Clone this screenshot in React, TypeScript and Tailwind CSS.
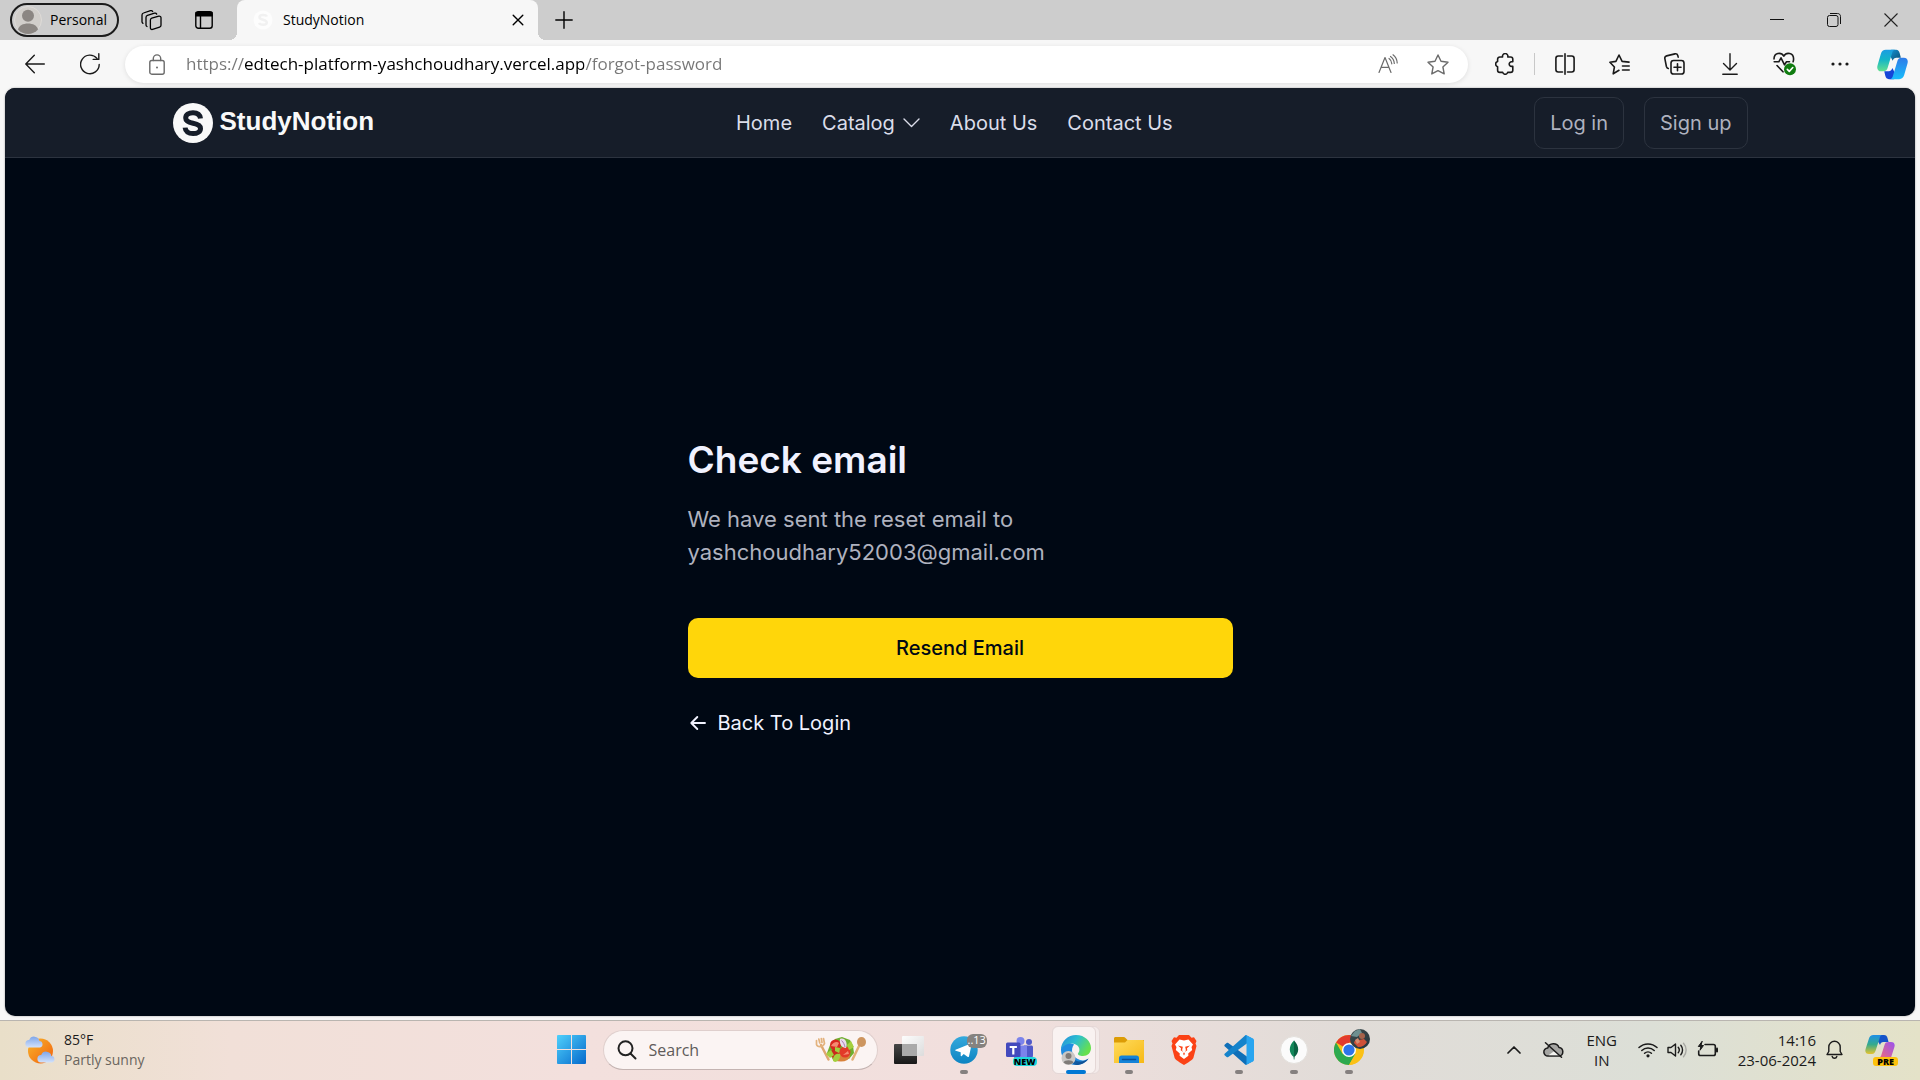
import type { ReactNode } from 'react';

const line = {
  fill: 'none',
  stroke: 'currentColor',
  strokeWidth: 1.4,
  strokeLinecap: 'round' as const,
  strokeLinejoin: 'round' as const,
};

function ToolButton({ label, children, className = '' }: { label: string; children: ReactNode; className?: string }) {
  return (
    <button type="button" aria-label={label} className={`flex h-10 w-[55px] shrink-0 items-center justify-center ${className}`}>
      {children}
    </button>
  );
}

function CopilotIcon() {
  return (
    <svg viewBox="0 0 30 30" className="size-[31px]" aria-hidden="true">
      <defs>
        <linearGradient id="cpA" x1="0" y1="0" x2="0" y2="1">
          <stop offset="0" stopColor="#1b9de2" />
          <stop offset="0.45" stopColor="#14b5c8" />
          <stop offset="1" stopColor="#63e08f" />
        </linearGradient>
        <linearGradient id="cpB" x1="0" y1="0" x2="0" y2="1">
          <stop offset="0" stopColor="#2f7be8" />
          <stop offset="1" stopColor="#19bdfb" />
        </linearGradient>
        <linearGradient id="cpC" x1="0" y1="0" x2="1" y2="1">
          <stop offset="0" stopColor="#1595d8" />
          <stop offset="1" stopColor="#0a4f74" />
        </linearGradient>
      </defs>
      <path d="M14 .8h4.500c2 0 2.900 1.300 3.400 3l1.200 4.600h-4.300c-2 0-3 1-3.600 3L11 3.500C11.700 1.800 12.500.8 14 .8z" fill="url(#cpC)" />
      <path d="M16 29.200h-4.500c-2 0-2.900-1.300-3.400-3L7 21.500h4.300c2 0 3-1 3.600-3L19 26.500c-.7 1.700-1.500 2.700-3 2.700z" fill="#1546d8" />
      <path d="M8.500.8h9C15.500 1 15 2.500 14.400 4.500l-4 13.500c-.7 2.400-1.800 3.600-4 3.600H4c-3 0-4.400-2.500-3.500-5.600L3.700 4.800C4.500 2.200 6 .8 8.500.8z" fill="url(#cpA)" />
      <path d="M21.500 29.200h-9c2-.2 2.500-1.700 3.100-3.700l4-13.500c.7-2.400 1.800-3.600 4-3.600H26c3 0 4.400 2.500 3.500 5.600l-3.200 11.200c-.8 2.600-2.300 4-4.800 4z" fill="url(#cpB)" />
    </svg>
  );
}

function TitleBar() {
  return (
    <header className="flex h-10 items-stretch bg-[#cdcdcd] text-black">
      <button type="button" className="ml-2.5 mt-[3px] flex h-[34px] w-[109px] items-center gap-2 rounded-full border-2 border-[#1b1b1b] pl-0.5 text-sm">
        <svg viewBox="0 0 28 28" className="size-7 shrink-0" aria-hidden="true">
          <circle cx="14" cy="14" r="13.500" fill="#d1ceca" stroke="#dedbd8" />
          <circle cx="14" cy="9.800" r="6" fill="#8b8682" />
          <path d="M4 23.500c1-4 5-6 10-6s9 2 10 6a13.400 13.400 0 0 1-20 0z" fill="#8b8682" />
        </svg>
        Personal
      </button>
      <button type="button" aria-label="Workspaces" className="ml-[5px] flex w-[53px] items-center justify-center">
        <svg viewBox="0 0 22 22" className="size-[22px]" {...line} strokeWidth={1.300} aria-hidden="true">
          <path d="M11.800 9.200l7-2c1.200-.3 2.200.4 2.200 1.600v7.400c0 .9-.5 1.600-1.400 1.900l-7 2.300c-1.200.4-2.200-.3-2.200-1.500v-7.800c0-.9.500-1.600 1.400-1.900z" />
          <path d="M7 17.500c-.7-.3-1-.8-1-1.600V8.400c0-1 .5-1.700 1.500-2l7-2.200c1-.3 1.800.1 2.200.9M3 14.300c-.7-.3-1-.8-1-1.600V6c0-1 .5-1.700 1.500-2l7-2.300c1-.3 1.800.1 2.200.8" />
        </svg>
      </button>
      <button type="button" aria-label="Tab actions menu" className="flex w-[53px] items-center justify-center">
        <svg viewBox="0 0 18 18" className="size-[18px]" {...line} aria-hidden="true">
          <rect x=".8" y=".8" width="16.400" height="16.400" rx="2.500" />
          <path d="M5.500 5v12" />
          <path d="M1 1.500h16v3.200H1z" fill="currentColor" />
        </svg>
      </button>
      <div className="relative ml-[7px] flex w-[301px] items-center rounded-t-lg bg-[#f7f7f7] pl-4 before:absolute before:-left-2 before:bottom-0 before:size-2 before:bg-[radial-gradient(circle_at_0_0,transparent_8px,#f7f7f7_8px)] after:absolute after:-right-2 after:bottom-0 after:size-2 after:bg-[radial-gradient(circle_at_100%_0,transparent_8px,#f7f7f7_8px)]">
        <svg viewBox="0 0 20 20" className="size-5" aria-hidden="true">
          <circle cx="10" cy="10" r="9.500" fill="#fdfdfd" />
          <path d="M14 6.500C13 4.700 6.500 4.300 6.500 7.300c0 3 7.300 2 7.300 5.200 0 3-6.800 2.700-7.800.5" fill="none" stroke="#f1f1f1" strokeWidth="2.500" />
        </svg>
        <span className="ml-2.5 flex-1 text-sm">StudyNotion</span>
        <button type="button" aria-label="Close tab" className="flex h-full w-10 items-center justify-center">
          <svg viewBox="0 0 12 12" className="size-3" {...line} aria-hidden="true"><path d="M1.200 1.200l9.600 9.600M10.800 1.200l-9.600 9.600" /></svg>
        </button>
      </div>
      <button type="button" aria-label="New tab" className="flex w-[52px] items-center justify-center">
        <svg viewBox="0 0 18 18" className="size-[18px]" {...line} aria-hidden="true"><path d="M9 .8v16.400M.8 9h16.400" /></svg>
      </button>
      <div className="ml-auto mr-px flex">
        <button type="button" aria-label="Minimize" className="flex w-[57px] items-center justify-center">
          <svg viewBox="0 0 14 14" className="size-3.5" aria-hidden="true"><path d="M0 6.500h14" stroke="#111" /></svg>
        </button>
        <button type="button" aria-label="Restore" className="flex w-[57px] items-center justify-center">
          <svg viewBox="0 0 14 14" className="size-3.5" fill="none" stroke="#111" aria-hidden="true">
            <rect x=".5" y="2.500" width="10.500" height="11" rx="2" />
            <path d="M3 .5h7.500c1.800 0 3 1.200 3 3V11" />
          </svg>
        </button>
        <button type="button" aria-label="Close window" className="flex w-[57px] items-center justify-center">
          <svg viewBox="0 0 14 14" className="size-3.5" stroke="#222" strokeWidth="1.100" aria-hidden="true"><path d="M.5.5l13 13M13.500.5l-13 13" /></svg>
        </button>
      </div>
    </header>
  );
}

function AddressBar() {
  return (
    <div className="flex h-12 items-center bg-[#f7f7f7] pl-[7px] text-[#1a1a1a]">
      <ToolButton label="Back">
        <svg viewBox="0 0 20 20" className="size-5" {...line} aria-hidden="true"><path d="M19.300 10H1M9.300 1.300L.8 10l8.500 8.700" /></svg>
      </ToolButton>
      <ToolButton label="Refresh">
        <svg viewBox="0 0 20 22" className="h-[22px] w-5" {...line} aria-hidden="true"><path d="M19.200 11.500A9.300 9.300 0 1 1 17 5.400M18.800.8v5.600h-5.600" /></svg>
      </ToolButton>
      <div className="ml-2 mr-[9px] flex h-[37px] flex-1 items-center rounded-full bg-white pl-[24px] pr-[5px] text-[#6b6b6b] shadow-[0_1px_5px_rgba(0,0,0,0.10)]">
        <svg viewBox="0 0 16 21" className="h-[21px] w-4" {...line} aria-hidden="true">
          <rect x=".8" y="6.500" width="14.400" height="13.700" rx="2" />
          <path d="M4.300 6.500V4.600a3.700 3.700 0 0 1 7.400 0v1.900" />
          <circle cx="8" cy="13.400" r="1" fill="currentColor" stroke="none" />
        </svg>
        <input
          aria-label="Address"
          defaultValue="https://edtech-platform-yashchoudhary.vercel.app/forgot-password"
          className="ml-[21px] flex-1 bg-[linear-gradient(90deg,#767676_58px,#000_58px,#000_398px,#767676_398px)] bg-clip-text text-[17px] text-transparent caret-black outline-none"
        />
        <button type="button" aria-label="Read aloud" className="flex w-[50px] items-center justify-center">
          <svg viewBox="0 0 20 20" className="size-5" {...line} strokeWidth={1.200} aria-hidden="true">
            <path d="M1 18.500L7 3.500l6 15M3.200 13.300h7.600M11 4.500c1.800 1.200 2.700 3 2.800 5.300M12.500 2.500c2.300 1.700 3.600 4 3.800 7M15 .8c2.700 2 4 4.800 4.200 8.200" />
          </svg>
        </button>
        <button type="button" aria-label="Add to favorites" className="flex w-[50px] items-center justify-center">
          <svg viewBox="0 0 22 21" className="h-[21px] w-[22px]" {...line} aria-hidden="true">
            <path d="M11 1l3 6.300 7 .9-5.100 4.800 1.300 6.900L11 16.600 4.800 19.900 6.100 13 1 8.200l7-.9z" />
          </svg>
        </button>
      </div>
      <ToolButton label="Extensions">
        <svg viewBox="0 0 20 22" className="h-[22px] w-5" {...line} strokeWidth={1.600} aria-hidden="true">
          <path d="M4.800 4h2.800a2.700 2.700 0 1 1 5.200 0h2.800c1.200 0 2.200 1 2.200 2.200v2.600h-1.300a2.300 2.300 0 1 0 0 4.600h1.300v3.800c0 1.200-1 2.200-2.200 2.200h-2.900a2.600 2.600 0 0 1-5 0H4.800c-1.200 0-2.200-1-2.200-2.200v-3.500a2.700 2.700 0 0 1 0-5.200V6.200C2.600 5 3.600 4 4.800 4z" />
        </svg>
      </ToolButton>
      <span className="mx-0.5 h-[22px] w-px bg-[#c8c8c8]" />
      <ToolButton label="Split screen">
        <svg viewBox="0 0 20 22" className="h-[22px] w-5" {...line} strokeWidth={1.600} aria-hidden="true">
          <path d="M7.500 3H3.300C2 3 .9 4.100.9 5.400v11.200C.9 17.900 2 19 3.300 19h4.200M10 .8v20.400M12.500 3h4.200c1.300 0 2.400 1.100 2.400 2.400v11.200c0 1.300-1.100 2.400-2.400 2.400h-4.200" />
        </svg>
      </ToolButton>
      <ToolButton label="Favorites">
        <svg viewBox="0 0 21 21" className="size-[21px]" {...line} strokeWidth={1.600} aria-hidden="true">
          <path d="M10 16.300l-5.800 3.500 1.200-6.800L.9 8.300l6-.9L10 1l3.100 6.400 6.900.7M13.500 12h6.700M13.500 16h6.700" />
        </svg>
      </ToolButton>
      <ToolButton label="Collections">
        <svg viewBox="0 0 21 22" className="h-[22px] w-[21px]" {...line} strokeWidth={1.600} aria-hidden="true">
          <rect x="7" y="7.500" width="13" height="13.500" rx="2.600" />
          <path d="M13.500 10.800v7M10 14.300h7M4.300 15.500c-1.200-.3-1.600-1-1.900-2L.9 5.800c-.3-1.400.4-2.600 1.700-2.900l8.300-2c1.400-.3 2.500.4 2.900 1.700l.4 1.500" />
        </svg>
      </ToolButton>
      <ToolButton label="Downloads">
        <svg viewBox="0 0 16 22" className="h-[22px] w-4" {...line} aria-hidden="true"><path d="M8 .8v16M1.500 10.500L8 17l6.500-6.500M.8 21.200h14.400" /></svg>
      </ToolButton>
      <ToolButton label="Browser essentials">
        <svg viewBox="0 0 23 24" className="h-6 w-[23px]" {...line} strokeWidth={1.600} aria-hidden="true">
          <path d="M1 7c0-6 7-7.500 9.800-2.800C13.600-.5 20.600 1 20.600 7c0 1-.2 1.800-.5 2.700M1.200 9.800h4.600l2.200-4 3.500 7 2-3h3M4 13.500l6 6.300" />
          <circle cx="17" cy="17.300" r="6" fill="#107c10" stroke="none" />
          <path d="M14.300 17.400l2 2 3.500-3.900" stroke="#fff" />
        </svg>
      </ToolButton>
      <ToolButton label="Settings and more">
        <svg viewBox="0 0 18 4" className="h-1 w-[18px]" fill="currentColor" aria-hidden="true"><circle cx="2" cy="2" r="1.600" /><circle cx="9" cy="2" r="1.600" /><circle cx="16" cy="2" r="1.600" /></svg>
      </ToolButton>
      <ToolButton label="Copilot" className="-ml-0.5"><CopilotIcon /></ToolButton>
    </div>
  );
}

function SiteNav() {
  return (
    <nav className="border-b border-[#2c333f] bg-[#161d29] font-[Inter,sans-serif] text-xl leading-[30px]">
      <div className="mx-auto flex h-[69px] w-11/12 max-w-[1575px] items-center justify-between">
        <a href="#home" className="flex w-[202px] items-center gap-[7px] text-[#f9f9f9]">
          <svg viewBox="0 0 40 40" className="size-10 shrink-0" aria-hidden="true">
            <circle cx="20" cy="20" r="20" fill="#f9f9f9" />
            <path d="M27.500 15.500C27 11.500 24 9.700 20 9.700c-4.300 0-7.300 2-7.300 5.300 0 3 2.200 4.200 7.300 5.200 5.200 1 7.500 2.200 7.500 5.200 0 3.200-3 5.200-7.500 5.200-4.700 0-7.600-2.300-7.900-6" fill="none" stroke="#161d29" strokeWidth="5" />
          </svg>
          <span className="pb-1 font-['Liberation_Sans',sans-serif] text-[26px] font-bold">StudyNotion</span>
        </a>
        <ul className="flex gap-[30px] text-[#dbddea]">
          <li><a href="#home">Home</a></li>
          <li>
            <button type="button" className="flex items-center gap-2">
              Catalog
              <svg viewBox="0 0 17 10" className="h-2.5 w-[17px]" {...line} aria-hidden="true"><path d="M1 1l7.500 7.500L16 1" /></svg>
            </button>
          </li>
          <li><a href="#about">About Us</a></li>
          <li><a href="#contact">Contact Us</a></li>
        </ul>
        <div className="flex gap-5 text-[#afb2bf]">
          <a href="#login" className="rounded-[10px] border border-[#2c333f] px-[15px] py-2.5">Log in</a>
          <a href="#signup" className="rounded-[10px] border border-[#2c333f] px-[15px] py-2.5">Sign up</a>
        </div>
      </div>
    </nav>
  );
}

function CheckEmail() {
  return (
    <main className="flex flex-1 items-center justify-center font-[Inter,sans-serif]">
      <section className="w-[545px]">
        <h1 className="text-[37px] font-semibold leading-[48px] text-[#f1f2ff]">Check email</h1>
        <p className="mb-[49px] mt-[19px] text-[22px] leading-[33px] text-[#afb2bf]">
          We have sent the reset email to<br />yashchoudhary52003@gmail.com
        </p>
        <button type="button" className="w-full rounded-[10px] bg-[#ffd60a] py-[15px] text-xl font-medium leading-[30px] text-[#000814]">
          Resend Email
        </button>
        <a href="#login" className="mt-[30px] flex items-center gap-2.5 text-xl leading-[30px] text-[#f1f2ff]">
          <svg viewBox="0 0 20 20" className="size-5" {...line} strokeWidth={1.900} aria-hidden="true"><path d="M17 10H3.500M9.300 4L3.300 10l6 6" /></svg>
          Back To Login
        </a>
      </section>
    </main>
  );
}

function TaskbarApp({ label, running = false, children }: { label: string; running?: boolean; children: ReactNode }) {
  return (
    <button type="button" aria-label={label} className="relative flex h-12 w-[55px] items-center justify-center">
      {children}
      {running && <span className="absolute bottom-0 h-1 w-2 rounded-full bg-[#85807f]" />}
    </button>
  );
}

function Taskbar() {
  return (
    <footer className="grid h-[60px] grid-cols-[1fr_auto_1fr] items-center border-t border-[#b9b5b0] bg-[linear-gradient(90deg,#e9dfc9_0%,#f1e0d8_12%,#f3e0dd_30%,#f1dfdd_52%,#e1dcd8_70%,#dcdfd7_86%,#e4e2c8_100%)] pb-0.5 text-[#1b1b1b]">
      <button type="button" className="flex w-fit items-center gap-2 pl-6 text-left text-sm leading-5">
        <svg viewBox="0 0 32 30" className="h-[30px] w-8" aria-hidden="true">
          <defs>
            <linearGradient id="sun" x1="0" y1="0" x2="1" y2="1"><stop offset="0" stopColor="#f8b62d" /><stop offset="1" stopColor="#f2600c" /></linearGradient>
            <linearGradient id="cloud" x1="0" y1="0" x2="0" y2="1"><stop offset="0" stopColor="#7fa6ea" /><stop offset="1" stopColor="#d3e2fb" /></linearGradient>
          </defs>
          <circle cx="16.500" cy="16" r="12.500" fill="url(#sun)" />
          <path d="M5 12.500a3.700 3.700 0 0 1 .2-7.400A5.300 5.300 0 0 1 15.400 6a3.300 3.300 0 0 1 .6 6.500z" fill="url(#cloud)" />
          <path d="M17 27.500a3.700 3.700 0 0 1 .2-7.400 5.300 5.300 0 0 1 10.200.9 3.300 3.300 0 0 1 .6 6.500z" fill="url(#cloud)" />
        </svg>
        <span>85°F<br /><span className="text-[#6a655e]">Partly sunny</span></span>
      </button>

      <div className="flex items-center">
        <TaskbarApp label="Start">
          <svg viewBox="0 0 29 29" className="size-[29px]" aria-hidden="true">
            <defs><linearGradient id="win" gradientUnits="userSpaceOnUse" x1="0" y1="0" x2="29" y2="29"><stop offset="0" stopColor="#4fd0fb" /><stop offset="1" stopColor="#0569cc" /></linearGradient></defs>
            <path d="M1 0h13v14H0V1a1 1 0 0 1 1-1zM15 0h13a1 1 0 0 1 1 1v13H15zM0 15h14v14H1a1 1 0 0 1-1-1zM15 15h14v13a1 1 0 0 1-1 1H15z" fill="url(#win)" />
          </svg>
        </TaskbarApp>
        <label className="mx-1 flex h-10 w-[275px] items-center rounded-full border border-[#dfcfcd] border-b-[#c4b4b2] bg-[#fbf4f3] pl-[13px] pr-2.5">
          <svg viewBox="0 0 20 20" className="size-5 shrink-0" fill="none" stroke="#222" strokeWidth="2" strokeLinecap="round" aria-hidden="true"><circle cx="8.500" cy="8.300" r="7" /><path d="M13.500 13.500l5 5" /></svg>
          <input placeholder="Search" aria-label="Search" className="ml-3 w-full min-w-0 flex-1 bg-transparent text-base outline-none placeholder:text-[#5f5b5a]" />
          <svg viewBox="0 0 52 28" className="h-7 w-[52px] shrink-0" aria-hidden="true">
            <path d="M6 9l7.500 14.500" stroke="#dfa770" strokeWidth="2.500" strokeLinecap="round" />
            <path d="M1.500 4.500v4c1 3 6.500 3 8-1L8.500 2.500M3.800 3l1 4M6.300 2.500l.7 4" stroke="#e3b27d" strokeWidth="1.700" fill="none" strokeLinecap="round" />
            <path d="M45 8l-7.500 15.500" stroke="#e3b078" strokeWidth="2.500" strokeLinecap="round" />
            <ellipse cx="46.500" cy="6" rx="4.500" ry="5" fill="#cd955f" />
            <path d="M12 17l3-8 5-6 7-2 8 3 3 6 1 7-5 6-5-2-5 4-6-1-2-4z" fill="#6fae2e" />
            <ellipse cx="26" cy="20" rx="9" ry="5.500" fill="#d9823a" />
            <circle cx="20.500" cy="9" r="5.500" fill="#d8281f" />
            <circle cx="30" cy="16" r="5.500" fill="#e23a28" />
            <circle cx="20" cy="17.500" r="4.500" fill="#c92a1c" />
            <path d="M16 10c2-4 6-5 8-3l-2 4zM28 19l5-4 1 3z" fill="#f58b72" />
            <path d="M25 3c5-2 8 4 6 9-4 0-7-4-6-9z" fill="#e9dcec" />
            <path d="M26.500 4.500c2 2 3 4 3.500 6.500" stroke="#a979b5" fill="none" />
            <path d="M18 25c0-6 3-8 7-7 1 4-2 8-5 8zM32 9l4-4 3 6-5 3zM11 18l5-4 3 5-4 3zM20 11l5 1-1 5-4-2z" fill="#a4cf3e" />
          </svg>
        </label>
        <TaskbarApp label="Task view">
          <svg viewBox="0 0 30 30" className="size-[30px]" aria-hidden="true">
            <defs>
              <linearGradient id="tvA" x1="0" y1="0" x2="0" y2="1"><stop offset="0" stopColor="#464646" /><stop offset="1" stopColor="#181818" /></linearGradient>
              <linearGradient id="tvB" x1="0" y1="0" x2="1" y2="1"><stop offset="0" stopColor="#fdfdfd" /><stop offset="1" stopColor="#dcdcdc" /></linearGradient>
            </defs>
            <rect x="0" y="9" width="23" height="20" rx="1" fill="url(#tvA)" />
            <rect x="8" y="1" width="22" height="20" rx="1" fill="url(#tvB)" />
            <path d="M8 9h15v12H8z" fill="#a9a9a9" />
          </svg>
        </TaskbarApp>
        <TaskbarApp label="Telegram" running>
          <svg viewBox="0 0 28 28" className="size-7" aria-hidden="true">
            <defs><linearGradient id="tg" x1="0" y1="0" x2="0" y2="1"><stop offset="0" stopColor="#35a9dc" /><stop offset="1" stopColor="#0d84c2" /></linearGradient></defs>
            <circle cx="14" cy="14" r="13.700" fill="url(#tg)" />
            <path d="M5.500 13.800l14.800-6c.8-.3 1.400.2 1.200 1.200L19 20.200c-.2.900-.8 1-1.500.6l-3.800-2.800-2 1.900c-.5.500-1 .3-1-.4v-3.300l-5-1.500c-.6-.2-.6-.7-.2-.9z" fill="#fff" />
          </svg>
          <span className="absolute left-[30px] top-2 flex h-3.5 items-center rounded-md bg-[#85827f] px-px text-[11px] text-white">..13</span>
        </TaskbarApp>
        <TaskbarApp label="Microsoft Teams">
          <svg viewBox="0 0 28 28" className="ml-0.5 size-7" aria-hidden="true">
            <circle cx="14.500" cy="5" r="4" fill="#7b83eb" /><circle cx="23" cy="6" r="3" fill="#5059c9" />
            <path d="M18 9.500h7.500c.8 0 1.500.7 1.500 1.500v8a5 5 0 0 1-9 3z" fill="#5059c9" />
            <path d="M8 9.500h13V20a7 7 0 0 1-13 3z" fill="#7b83eb" />
            <rect x="0" y="6.500" width="14.500" height="14.500" rx="1.500" fill="#4349bd" />
            <path d="M3.700 10h7.200v2H8.400v6.500H6.200V12H3.700z" fill="#fff" />
          </svg>
          <span className="absolute bottom-2 right-2.5 flex h-[9px] items-center rounded-sm bg-[#1fd8dc] px-px text-[9px] font-extrabold leading-none text-black">NEW</span>
        </TaskbarApp>
        <button type="button" aria-label="Microsoft Edge" className="relative flex h-12 w-[55px] items-center pl-[5px]">
          <span className="absolute left-[5px] h-12 w-12 rounded-md border border-[#e6d9d8] bg-[#f4ebea]" />
          <span className="relative flex h-12 w-11 items-center justify-center rounded-md border border-[#e4d7d6] bg-[#f9f2f1]">
            <svg viewBox="0 0 30 30" className="ml-1 size-[30px]" aria-hidden="true">
              <defs>
                <linearGradient id="edA" x1="0" y1="0" x2="1" y2=".5"><stop offset="0" stopColor="#2488dc" /><stop offset=".5" stopColor="#2cbfcf" /><stop offset="1" stopColor="#66e04e" /></linearGradient>
                <linearGradient id="edB" x1="0" y1="0" x2="1" y2="1"><stop offset="0" stopColor="#1a7fd0" /><stop offset="1" stopColor="#0c4384" /></linearGradient>
              </defs>
              <path d="M0 14C1 8 8 6.500 13 9.500c-4 5-2 13 6 15.500 3.500 1 6.500 0 8.500-1.500C25 27.500 20.500 30 15 30 6.500 30 0 23 0 15z" fill="#1f8ce0" />
              <path d="M10.500 14c-3 6 1.500 12.300 9 12.500 3 0 5.500-1 8-3C25 27.500 20.500 30 15 30 7 28 5.500 19.500 10.500 14z" fill="url(#edB)" />
              <path d="M0 14C.5 6 7 0 15 0c9 0 15 6.500 15 13 0 5-3.500 8-8 8-3.500 0-5.500-1.300-5-2.500.5-1 1.400-1.700 1.400-3.700C18.400 8 6 5.500 0 14z" fill="url(#edA)" />
              <circle cx="7.500" cy="23" r="7" fill="#c9c7c5" /><circle cx="7.500" cy="21" r="3" fill="#7f7b78" />
              <path d="M2.500 27.500c1-3 9-3 10 0a7 7 0 0 1-10 0z" fill="#7f7b78" />
            </svg>
          </span>
          <span className="absolute bottom-0 left-[19px] h-1 w-5 rounded-full bg-[#0078d4]" />
        </button>
        <TaskbarApp label="File Explorer" running>
          <svg viewBox="0 0 30 28" className="h-7 w-[30px]" aria-hidden="true">
            <defs><linearGradient id="fe" x1="0" y1="0" x2="1" y2="1"><stop offset="0" stopColor="#ffdb5c" /><stop offset="1" stopColor="#f7b916" /></linearGradient></defs>
            <path d="M0 2.500C0 1.600.6 1 1.500 1h8c.8 0 1.500.3 2 1l2 2H30v5H0z" fill="#dc9c06" />
            <path d="M0 6.500h11l2.500-2.500H28.500c.9 0 1.500.6 1.500 1.500V27H0z" fill="url(#fe)" />
            <path d="M5 27v-5c0-1.400.9-2.500 2.500-2.500h15c1.600 0 2.500 1.100 2.500 2.500v5z" fill="#1583d8" />
            <path d="M8.500 23.500h13" stroke="#0b4f97" strokeWidth="1.500" strokeLinecap="round" />
          </svg>
        </TaskbarApp>
        <TaskbarApp label="Brave">
          <svg viewBox="0 0 26 30" className="h-[30px] w-[26px]" aria-hidden="true">
            <path d="M8 0h10l2.500 2.700 2.500-.5L25.500 6l-1 2.500 1 2.500-3 11.500c-.5 1.800-2 3-9.500 7.500-7.500-4.500-9-5.700-9.500-7.500L.5 11l1-2.500L.5 6 3 2.200l2.500.5z" fill="#fb4216" />
            <path d="M13 5.500l4.500-1 4.500 5-1.500 2.500.7 3-4 3.500.2 2.300L13 24l-4.400-3.200.2-2.300-4-3.500.7-3L4 9.500l4.500-5z" fill="#fff" />
            <path d="M7 10.500l4.800 1.200-.7 3.600 1.900 3.200 1.900-3.200-.7-3.600 4.800-1.200-3 2.800.3 2-2.500 1.700v2L13 20.500l-.8-1.500v-2l-2.500-1.700.3-2z" fill="#fb4216" />
          </svg>
        </TaskbarApp>
        <TaskbarApp label="Visual Studio Code" running>
          <svg viewBox="0 0 30 30" className="size-[30px]" aria-hidden="true">
            <path d="M.6 9.800l2-1.800c.5-.4 1.200-.4 1.700 0L29 26l-6.500 3.800c-.6.200-1 .1-1.400-.3L.6 11.200c-.4-.4-.4-1 0-1.400z" fill="#0f6fb8" />
            <path d="M.6 20.200l2 1.800c.5.400 1.200.4 1.700 0L29 4 22.500.2c-.6-.2-1-.1-1.400.3L.6 18.800c-.4.400-.4 1 0 1.400z" fill="#1583cb" />
            <path d="M22 .2L29 3.500c.6.300 1 .9 1 1.500v20c0 .6-.4 1.200-1 1.500l-7 3.300c-.5.200-.9.100-1.200-.3.700.3 1.700 0 1.700-1.300V1.800C22.500.5 21.500.2 20.800.5c.3-.4.7-.5 1.200-.3z" fill="#29a5f0" />
          </svg>
        </TaskbarApp>
        <TaskbarApp label="MongoDB Compass" running>
          <svg viewBox="0 0 28 28" className="size-7" aria-hidden="true">
            <circle cx="14" cy="14" r="13.500" fill="#fbfbfb" stroke="#e3e0dc" />
            <path d="M14 4.500c-3 3-4.200 6-4.200 9 0 3.300 1.700 5.700 3.700 7.200l.3 2.800h.4V4.500z" fill="#12875a" />
            <path d="M14 4.500c3 3 4.200 6 4.200 9 0 3.300-1.700 5.700-3.700 7.200l-.3 2.800H14z" fill="#0a6242" />
          </svg>
        </TaskbarApp>
        <TaskbarApp label="Google Chrome" running>
          <svg viewBox="0 0 38 38" className="-mt-1.5 ml-[7px] size-[38px]" aria-hidden="true">
            <defs><linearGradient id="av" x1="0" y1="0" x2="1" y2="1"><stop offset="0" stopColor="#3d4a4c" /><stop offset="1" stopColor="#26353d" /></linearGradient></defs>
            <circle cx="15" cy="22" r="15" fill="#fbc116" />
            <path d="M15 22L2 14.500a15 15 0 0 1 26 0H15z" fill="#e33b2e" />
            <path d="M2 14.500L8.500 25.800 15 22l6.500 3.800L15 37A15 15 0 0 1 2 14.500z" fill="#2da94f" />
            <path d="M15 15.200h13A15 15 0 0 1 15 37l6.500-11.200z" fill="#fbc116" />
            <circle cx="15" cy="22" r="7" fill="#fff" /><circle cx="15" cy="22" r="5.600" fill="#2e74ea" />
            <circle cx="26" cy="11" r="10" fill="url(#av)" />
            <path d="M17 8l4-5 5-2 2 4-5 4z" fill="#6e8f90" />
            <circle cx="28" cy="8" r="3" fill="#a4624b" />
            <path d="M20 15c0-3 3-4 5-3l5-1 3 3a10 10 0 0 1-9 5z" fill="#cf5138" />
            <path d="M21 12l3-2 2 4-3 2z" fill="#d58d72" />
          </svg>
        </TaskbarApp>
      </div>

      <div className="flex items-center justify-end">
        <button type="button" aria-label="Show hidden icons" className="flex h-10 w-10 items-center justify-center">
          <svg viewBox="0 0 14 8" className="h-2 w-3.5" {...line} strokeWidth={1.700} aria-hidden="true"><path d="M1 7l6-6 6 6" /></svg>
        </button>
        <button type="button" aria-label="OneDrive" className="flex h-10 w-10 items-center justify-center">
          <svg viewBox="0 0 21 16" className="h-4 w-[21px]" {...line} strokeWidth={1.500} aria-hidden="true">
            <path d="M5 14a4 4 0 0 1-.3-8A6 6 0 0 1 16 5.500a4.300 4.300 0 0 1 .3 8.500z" fill="#a5a5a2" />
            <path d="M5.500 13.300l5.500-4 5.500 4z" fill="#f4f4f0" stroke="none" />
            <path d="M2.500.8l16 14.400" />
          </svg>
        </button>
        <button type="button" className="w-14 text-center text-[15px] leading-5">ENG<br />IN</button>
        <button type="button" aria-label="Network, volume and battery" className="flex h-10 items-center gap-[9px] pl-2">
          <svg viewBox="0 0 20 16" className="h-4 w-5" {...line} strokeWidth={1.500} aria-hidden="true">
            <path d="M1 5.500a13 13 0 0 1 18 0M3.800 8.500a9 9 0 0 1 12.400 0M6.600 11.300a5 5 0 0 1 6.800 0" />
            <circle cx="10" cy="13.800" r="1.600" fill="currentColor" stroke="none" />
          </svg>
          <svg viewBox="0 0 21 16" className="h-4 w-[21px]" {...line} aria-hidden="true">
            <path d="M1 5.500v5h3L8.500 14V2L4 5.500zM11.200 5.300c1.200 1.500 1.200 4 0 5.400M13.800 3.200c2.300 2.700 2.300 7 0 9.600" />
            <path d="M16.500 1.200c3.500 3.800 3.500 9.800 0 13.600" stroke="#a9a9a4" />
          </svg>
          <svg viewBox="0 0 21 17" className="h-[17px] w-[21px]" {...line} strokeWidth={1.600} aria-hidden="true">
            <path d="M8 3.500h8.500c1 0 1.800.8 1.800 1.800v7.400c0 1-.8 1.800-1.800 1.800H3.500c-1 0-1.800-.8-1.800-1.800V10" />
            <path d="M20 7.500v3" strokeWidth="2" /><path d="M5 .5L1.300 5.500h2.500L3 9.300 6.500 4.500H4.300z" fill="currentColor" strokeWidth="1" />
          </svg>
        </button>
        <button type="button" className="ml-5 text-right text-[15px] leading-5">14:16<br />23-06-2024</button>
        <button type="button" aria-label="Notifications" className="flex h-10 w-9 items-center justify-center">
          <svg viewBox="0 0 17 19" className="h-[19px] w-[17px]" {...line} aria-hidden="true">
            <path d="M1 14.500l1.800-3V7a5.700 5.700 0 0 1 11.400 0v4.500l1.800 3zM6.200 16.500a2.400 2.400 0 0 0 4.600 0" />
          </svg>
        </button>
        <button type="button" aria-label="Copilot preview" className="relative ml-3 mr-6 flex h-10 w-8 items-center justify-center">
          <svg viewBox="0 0 30 28" className="mb-1 h-7 w-[30px]" aria-hidden="true">
            <defs>
              <linearGradient id="prA" x1="0" y1="0" x2="0" y2="1"><stop offset="0" stopColor="#1d8fe8" /><stop offset=".5" stopColor="#35ab8c" /><stop offset="1" stopColor="#e6c32e" /></linearGradient>
              <linearGradient id="prB" x1="1" y1="0" x2="0" y2="1"><stop offset="0" stopColor="#9a52f0" /><stop offset="1" stopColor="#fb6f66" /></linearGradient>
            </defs>
            <path d="M14 1h5c2 0 3 1 3.500 3l1 4h-5c-2 0-3 1-3.500 3L11 4z" fill="#1553c9" />
            <path d="M8.500 1h9c-2 .2-2.500 1.500-3 3.500l-3.500 11c-.7 2.400-1.800 4.500-4 4.500H4c-3 0-4.300-2-3.400-5L3.800 5C4.500 2.400 6 1 8.500 1z" fill="url(#prA)" />
            <path d="M21 27h-9l4-5 3.500-11c.7-2.400 1.800-3 4-3H26c3 0 4.300 2 3.400 5l-3.200 10c-.7 2.600-2.700 4-5.200 4z" fill="url(#prB)" />
          </svg>
          <span className="absolute -right-0.5 bottom-1 rounded-[3px] bg-[#fdc20c] px-1 text-[9px] font-extrabold leading-[9px] text-black">PRE</span>
        </button>
      </div>
    </footer>
  );
}

export default function App() {
  return (
    <div className="flex min-h-screen flex-col bg-[#f7f7f7] font-['Open_Sans',sans-serif]">
      <TitleBar />
      <AddressBar />
      <div className="mx-[5px] mb-1 flex flex-1 flex-col overflow-hidden rounded-[10px] bg-[#000814] shadow-[0_0_2px_rgba(0,0,0,0.4)]">
        <SiteNav />
        <CheckEmail />
      </div>
      <Taskbar />
    </div>
  );
}
